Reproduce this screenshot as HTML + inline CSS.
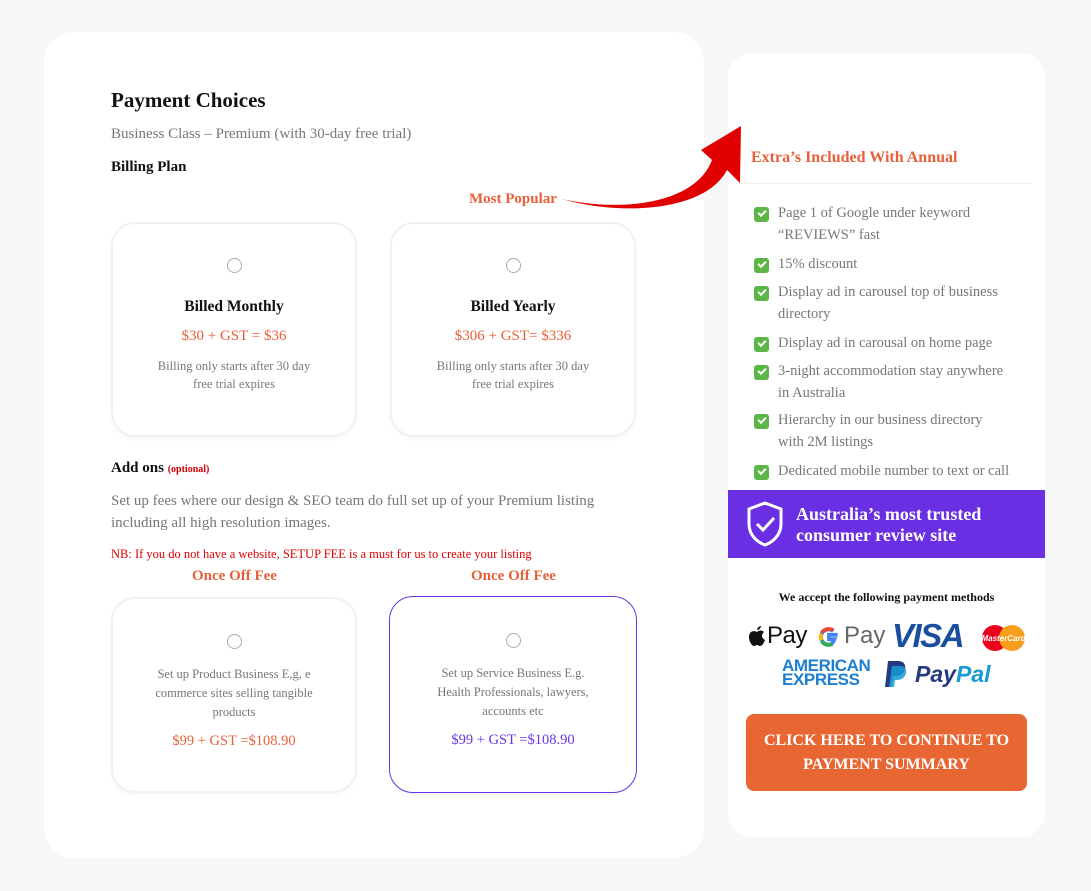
<!DOCTYPE html>
<html><head><meta charset="utf-8"><style>
*{margin:0;padding:0;box-sizing:border-box}
body{width:1091px;height:891px;background:#f6f7f9;font-family:"Liberation Serif",serif;position:relative;overflow:hidden}
.a{position:absolute}
.panel{background:#fff;border-radius:30px}
.card{position:absolute;background:#fff;border:2px solid #f1f1f1;border-radius:24px;text-align:center;box-shadow:0 2px 4px rgba(0,0,0,0.03)}
.radio{width:15px;height:15px;border:1px solid #aaa;border-radius:50%;margin:0 auto}
.or{color:#e8603a}
.gr{color:#777}
ul{list-style:none}
li{position:absolute;left:0;color:#777;font-size:14.5px;line-height:21.5px;padding-left:24px;width:285px}
li:before{content:"";position:absolute;left:0;top:4px;width:15px;height:15px;background:#5cb646;border-radius:3px}
li:after{content:"";position:absolute;left:4px;top:7px;width:6px;height:3px;border-left:2px solid #fff;border-bottom:2px solid #fff;transform:rotate(-45deg)}
</style></head><body>
<div class="a panel" style="left:44px;top:32px;width:660px;height:826px"></div>
<div class="a panel" style="left:728px;top:53px;width:317px;height:784px;border-radius:24px"></div>

<div class="a" style="left:111px;top:88px;font-size:21px;font-weight:bold;color:#111">Payment Choices</div>
<div class="a gr" style="left:111px;top:126px;font-size:15px">Business Class – Premium (with 30-day free trial)</div>
<div class="a" style="left:111px;top:159px;font-size:15px;font-weight:bold;color:#111">Billing Plan</div>
<div class="a or" style="left:469px;top:191px;font-size:15px;font-weight:bold">Most Popular</div>

<svg class="a" style="left:555px;top:120px" width="190" height="95" viewBox="555 120 190 95">
<path d="M562 199 C620 212 695 205 712 160 L701 150 L741 126 L740 183 L727 170 C705 212 620 216 562 199 Z" fill="#e00000"/>
</svg>

<div class="card" style="left:111px;top:222px;width:246px;height:215px">
<div class="radio" style="margin-top:34px"></div>
<div style="margin-top:25px;font-size:15.5px;font-weight:bold;color:#111">Billed Monthly</div>
<div class="or" style="margin-top:12px;font-size:15px">$30 + GST = $36</div>
<div class="gr" style="margin-top:12px;font-size:12.5px;line-height:18px">Billing only starts after 30 day<br>free trial expires</div>
</div>
<div class="card" style="left:390px;top:222px;width:246px;height:215px">
<div class="radio" style="margin-top:34px"></div>
<div style="margin-top:25px;font-size:15.5px;font-weight:bold;color:#111">Billed Yearly</div>
<div class="or" style="margin-top:12px;font-size:15px">$306 + GST= $336</div>
<div class="gr" style="margin-top:12px;font-size:12.5px;line-height:18px">Billing only starts after 30 day<br>free trial expires</div>
</div>

<div class="a" style="left:111px;top:460px;font-size:15px;font-weight:bold;color:#111">Add ons <span style="font-size:10px;color:#d00000">(optional)</span></div>
<div class="a gr" style="left:111px;top:490px;font-size:15px;line-height:22px;width:520px">Set up fees where our design &amp; SEO team do full set up of your Premium listing including all high resolution images.</div>
<div class="a" style="left:111px;top:547px;font-size:12.5px;color:#e00000">NB: If you do not have a website, SETUP FEE is a must for us to create your listing</div>
<div class="a or" style="left:192px;top:568px;font-size:15px;font-weight:bold">Once Off Fee</div>
<div class="a or" style="left:471px;top:568px;font-size:15px;font-weight:bold">Once Off Fee</div>

<div class="card" style="left:111px;top:597px;width:246px;height:196px">
<div class="radio" style="margin-top:35px"></div>
<div class="gr" style="margin:16px auto 0;width:176px;font-size:12.5px;line-height:19px">Set up Product Business E,g, e commerce sites selling tangible products</div>
<div class="or" style="margin-top:11px;font-size:14.5px">$99 + GST =$108.90</div>
</div>
<div class="card" style="left:389px;top:596px;width:248px;height:197px;border:1px solid #6a35e6">
<div class="radio" style="margin-top:36px"></div>
<div class="gr" style="margin:16px auto 0;width:172px;font-size:12.5px;line-height:19px">Set up Service Business E.g. Health Professionals, lawyers, accounts etc</div>
<div style="margin-top:11px;font-size:14.5px;color:#6a35e6">$99 + GST =$108.90</div>
</div>

<div class="a or" style="left:751px;top:149px;font-size:16px;font-weight:bold">Extra’s Included With Annual</div>
<div class="a" style="left:740px;top:183px;width:292px;height:1px;background:#eee"></div>
<ul class="a" style="left:754px;top:203px;width:290px">
<li style="top:0">Page 1 of Google under keyword<br>“REVIEWS” fast</li>
<li style="top:51px">15% discount</li>
<li style="top:79px">Display ad in carousel top of business<br>directory</li>
<li style="top:130px">Display ad in carousal on home page</li>
<li style="top:158px">3-night accommodation stay anywhere<br>in Australia</li>
<li style="top:207px">Hierarchy in our business directory<br>with 2M listings</li>
<li style="top:258px">Dedicated mobile number to text or call</li>
</ul>

<div class="a" style="left:728px;top:490px;width:317px;height:68px;background:#6a2fe2"></div>
<svg class="a" style="left:745px;top:500px" width="40" height="48" viewBox="0 0 40 48"><path d="M20 3 L36 9 V24 C36 35 28 42 20 45 C12 42 4 35 4 24 V9 Z" fill="none" stroke="#fff" stroke-width="3"/><path d="M12 24 L18 30 L29 18" fill="none" stroke="#fff" stroke-width="3"/></svg>
<div class="a" style="left:796px;top:504px;font-size:18px;font-weight:bold;color:#fff;line-height:21px">Australia’s most trusted<br>consumer review site</div>

<div class="a" style="left:728px;top:590px;width:317px;text-align:center;font-size:12px;font-weight:bold;color:#111">We accept the following payment methods</div>
<svg class="a" style="left:748px;top:625px" width="18" height="22" viewBox="0 0 18 22"><path d="M9 7 C6 5 1 6 1 12 C1 17 4 21 6 21 C7 21 8 20 9 20 C10 20 11 21 12 21 C14 21 16 18 17 15 C15 14 14 12 14 11 C14 9 15 8 16 7 C14 5 11 5 9 7 Z" fill="#111"/><path d="M9 5 C9 3 11 1 13 1 C13 3 11 5 9 5 Z" fill="#111"/></svg>
<div class="a" style="left:767px;top:622px;font-family:'Liberation Sans',sans-serif;font-size:24px;color:#111;letter-spacing:-0.5px">Pay</div>
<svg class="a" style="left:817px;top:625px" width="24" height="24" viewBox="0 0 22 22"><path d="M19 9 H11 V13 H16 C15 16 13 18 11 18 A7 7 0 1 1 15 5.5" fill="none" stroke="#4285f4" stroke-width="3.5"/><path d="M4.5 7 A7.5 7.5 0 0 1 15 5" fill="none" stroke="#ea4335" stroke-width="3.5"/><path d="M4 14 A7.5 7.5 0 0 1 4 8" fill="none" stroke="#fbbc05" stroke-width="3.5"/><path d="M4.5 15 A7.5 7.5 0 0 0 14 17.5" fill="none" stroke="#34a853" stroke-width="3.5"/></svg>
<div class="a" style="left:844px;top:622px;font-family:'Liberation Sans',sans-serif;font-size:24px;color:#666">Pay</div>
<div class="a" style="left:892px;top:617px;font-family:'Liberation Sans',sans-serif;font-size:33px;font-weight:bold;font-style:italic;color:#1a4fa0;letter-spacing:-1.5px">VISA</div>
<svg class="a" style="left:981px;top:624px" width="45" height="28" viewBox="0 0 45 28"><circle cx="14" cy="14" r="13" fill="#eb001b"/><circle cx="31" cy="14" r="13" fill="#f79e1b"/><text x="22.5" y="17" font-size="8" fill="#fff" text-anchor="middle" font-family="Liberation Sans" font-style="italic" font-weight="bold">MasterCard</text></svg>
<div class="a" style="left:782px;top:659px;font-family:'Liberation Sans',sans-serif;font-size:17px;font-weight:bold;color:#1e7fd0;line-height:13.5px;letter-spacing:-0.4px">AMERICAN<br>EXPRESS</div>
<svg class="a" style="left:884px;top:660px" width="24" height="28" viewBox="0 0 24 28"><path d="M4 1 H14 C20 1 22 5 21 9 C20 14 16 16 12 16 H9 L7 27 H1 Z" fill="#253b80"/><path d="M8 6 H16 C21 6 23 10 22 13 C21 18 17 20 13 20 H11 L10 27 H5 Z" fill="#179bd7" opacity=".85"/></svg>
<div class="a" style="left:915px;top:661px;font-family:'Liberation Sans',sans-serif;font-size:23px;font-weight:bold;font-style:italic;color:#253b80">Pay<span style="color:#179bd7">Pal</span></div>

<div class="a" style="left:746px;top:714px;width:281px;height:77px;background:#e86632;border-radius:8px;color:#fff;font-size:16px;font-weight:bold;text-align:center;line-height:24px;padding-top:15px">CLICK HERE TO CONTINUE TO<br>PAYMENT SUMMARY</div>
</body></html>
